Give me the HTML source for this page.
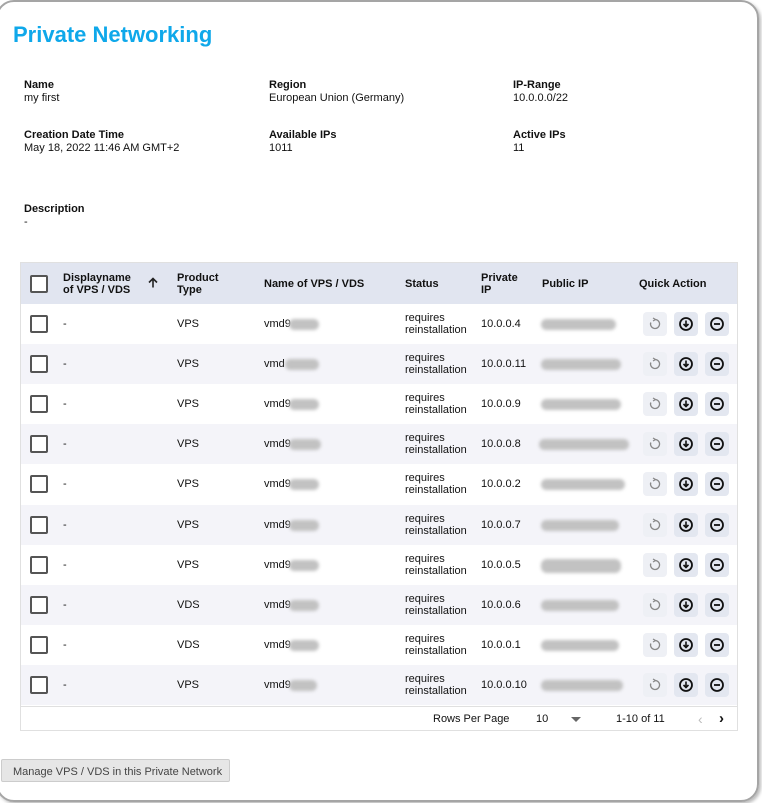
<!DOCTYPE html>
<html><head><meta charset="utf-8"><style>
*{box-sizing:border-box;margin:0;padding:0}
body{width:762px;height:803px;background:#fff;font-family:"Liberation Sans",Arial,sans-serif;position:relative;overflow:hidden;color:#111}
.frame{position:absolute;left:-4px;top:0;width:763px;height:802px;border:2px solid #a5a5a5;border-radius:18px;box-shadow:2px 2px 3px #bbb}
h1{position:absolute;left:13px;top:22px;font-size:22px;color:#0fa8ea;font-weight:bold}
.f{position:absolute;font-size:11px;line-height:13px}
.f b{display:block;font-size:11px}
.tbl{position:absolute;left:20px;top:262px;width:718px;height:469px;border:1px solid #e0e0e0}
.hd{position:absolute;left:0;top:0;width:716px;height:41px;background:#e1e5f0;font-weight:bold;font-size:11px}
.row{position:absolute;left:0;width:716px;height:40.1px;font-size:11px}
.row:nth-child(even){background:#f4f4f9}
.c{position:absolute;top:50%;transform:translateY(-50%);line-height:12px}
.cb{position:absolute;left:9px;top:50%;margin-top:-9px;width:18px;height:18px;border:2px solid #555;border-radius:2px;background:#fff}
.bl{position:absolute;top:50%;height:11px;margin-top:-5px;background:#c2c2c2;border-radius:6px;filter:blur(1.5px)}
.btn{position:absolute;top:50%;margin-top:-12px;width:24px;height:24px;border-radius:4px;background:#e3e7f0}
.btn svg{position:absolute;left:4px;top:4px}
.b1{left:622px;background:#eef0f5}.b2{left:653px}.b3{left:684px}
.ft{position:absolute;left:0;top:443px;width:716px;height:24px;border-top:1px solid #e0e0e0;font-size:11px}
.mb{position:absolute;left:1px;top:759px;width:229px;height:23px;background:#e6e6e6;border:1px solid #ccc;border-radius:2px;font-size:11px;color:#444;padding:6px 0 0 11px}
</style></head><body>
<div class="frame"></div>
<h1>Private Networking</h1>
<div class="f" style="left:24px;top:79px"><b>Name</b>my first</div>
<div class="f" style="left:269px;top:79px"><b>Region</b>European Union (Germany)</div>
<div class="f" style="left:513px;top:79px"><b>IP-Range</b>10.0.0.0/22</div>
<div class="f" style="left:24px;top:129px"><b>Creation Date Time</b>May 18, 2022 11:46 AM GMT+2</div>
<div class="f" style="left:269px;top:129px"><b>Available IPs</b>1011</div>
<div class="f" style="left:513px;top:129px"><b>Active IPs</b>11</div>
<div class="f" style="left:24px;top:203px"><b>Description</b>-</div>

<div class="tbl">
<div class="hd">
<div class="cb"></div>
<div class="c" style="left:42px">Displayname<br>of VPS / VDS</div>
<div class="c" style="left:126px"><svg width="12" height="12"><path d="M6 11V2M2 6l4-4 4 4" fill="none" stroke="#222" stroke-width="1.6"/></svg></div>
<div class="c" style="left:156px">Product<br>Type</div>
<div class="c" style="left:243px">Name of VPS / VDS</div>
<div class="c" style="left:384px">Status</div>
<div class="c" style="left:460px">Private<br>IP</div>
<div class="c" style="left:521px">Public IP</div>
<div class="c" style="left:618px">Quick Action</div>
</div>
<div style="position:absolute;left:0;top:41px;width:716px;height:402px">
<div class="row" style="top:0"><div class="cb"></div><div class="c" style="left:42px">-</div><div class="c" style="left:156px">VPS</div><div class="c" style="left:243px">vmd9</div><div class="bl" style="left:268px;width:30px"></div><div class="c" style="left:384px">requires<br>reinstallation</div><div class="c" style="left:460px">10.0.0.4</div><div class="bl" style="left:520px;width:75px"></div><div class="btn b1"><svg width="16" height="16"><path d="M8 3.5a4.5 4.5 0 1 1-4.2 3" fill="none" stroke="#888" stroke-width="1.3"/><path d="M6 2l2.5 1.5L6 5" fill="none" stroke="#888" stroke-width="1.2"/></svg></div><div class="btn b2"><svg width="16" height="16"><circle cx="8" cy="8" r="6" fill="none" stroke="#111" stroke-width="1.8"/><path d="M8 4.5v6M5.5 8L8 10.5 10.5 8" fill="none" stroke="#111" stroke-width="1.6"/></svg></div><div class="btn b3"><svg width="16" height="16"><circle cx="8" cy="8" r="6" fill="none" stroke="#111" stroke-width="1.8"/><path d="M5 8h6" stroke="#111" stroke-width="1.8"/></svg></div></div>
<div class="row" style="top:40.1px"><div class="cb"></div><div class="c" style="left:42px">-</div><div class="c" style="left:156px">VPS</div><div class="c" style="left:243px">vmd</div><div class="bl" style="left:264px;width:34px"></div><div class="c" style="left:384px">requires<br>reinstallation</div><div class="c" style="left:460px">10.0.0.11</div><div class="bl" style="left:520px;width:80px"></div><div class="btn b1"><svg width="16" height="16"><path d="M8 3.5a4.5 4.5 0 1 1-4.2 3" fill="none" stroke="#888" stroke-width="1.3"/><path d="M6 2l2.5 1.5L6 5" fill="none" stroke="#888" stroke-width="1.2"/></svg></div><div class="btn b2"><svg width="16" height="16"><circle cx="8" cy="8" r="6" fill="none" stroke="#111" stroke-width="1.8"/><path d="M8 4.5v6M5.5 8L8 10.5 10.5 8" fill="none" stroke="#111" stroke-width="1.6"/></svg></div><div class="btn b3"><svg width="16" height="16"><circle cx="8" cy="8" r="6" fill="none" stroke="#111" stroke-width="1.8"/><path d="M5 8h6" stroke="#111" stroke-width="1.8"/></svg></div></div>
<div class="row" style="top:80.2px"><div class="cb"></div><div class="c" style="left:42px">-</div><div class="c" style="left:156px">VPS</div><div class="c" style="left:243px">vmd9</div><div class="bl" style="left:268px;width:30px"></div><div class="c" style="left:384px">requires<br>reinstallation</div><div class="c" style="left:460px">10.0.0.9</div><div class="bl" style="left:520px;width:80px"></div><div class="btn b1"><svg width="16" height="16"><path d="M8 3.5a4.5 4.5 0 1 1-4.2 3" fill="none" stroke="#888" stroke-width="1.3"/><path d="M6 2l2.5 1.5L6 5" fill="none" stroke="#888" stroke-width="1.2"/></svg></div><div class="btn b2"><svg width="16" height="16"><circle cx="8" cy="8" r="6" fill="none" stroke="#111" stroke-width="1.8"/><path d="M8 4.5v6M5.5 8L8 10.5 10.5 8" fill="none" stroke="#111" stroke-width="1.6"/></svg></div><div class="btn b3"><svg width="16" height="16"><circle cx="8" cy="8" r="6" fill="none" stroke="#111" stroke-width="1.8"/><path d="M5 8h6" stroke="#111" stroke-width="1.8"/></svg></div></div>
<div class="row" style="top:120.3px"><div class="cb"></div><div class="c" style="left:42px">-</div><div class="c" style="left:156px">VPS</div><div class="c" style="left:243px">vmd9</div><div class="bl" style="left:268px;width:32px"></div><div class="c" style="left:384px">requires<br>reinstallation</div><div class="c" style="left:460px">10.0.0.8</div><div class="bl" style="left:518px;width:90px"></div><div class="btn b1"><svg width="16" height="16"><path d="M8 3.5a4.5 4.5 0 1 1-4.2 3" fill="none" stroke="#888" stroke-width="1.3"/><path d="M6 2l2.5 1.5L6 5" fill="none" stroke="#888" stroke-width="1.2"/></svg></div><div class="btn b2"><svg width="16" height="16"><circle cx="8" cy="8" r="6" fill="none" stroke="#111" stroke-width="1.8"/><path d="M8 4.5v6M5.5 8L8 10.5 10.5 8" fill="none" stroke="#111" stroke-width="1.6"/></svg></div><div class="btn b3"><svg width="16" height="16"><circle cx="8" cy="8" r="6" fill="none" stroke="#111" stroke-width="1.8"/><path d="M5 8h6" stroke="#111" stroke-width="1.8"/></svg></div></div>
<div class="row" style="top:160.4px"><div class="cb"></div><div class="c" style="left:42px">-</div><div class="c" style="left:156px">VPS</div><div class="c" style="left:243px">vmd9</div><div class="bl" style="left:268px;width:30px"></div><div class="c" style="left:384px">requires<br>reinstallation</div><div class="c" style="left:460px">10.0.0.2</div><div class="bl" style="left:520px;width:84px"></div><div class="btn b1"><svg width="16" height="16"><path d="M8 3.5a4.5 4.5 0 1 1-4.2 3" fill="none" stroke="#888" stroke-width="1.3"/><path d="M6 2l2.5 1.5L6 5" fill="none" stroke="#888" stroke-width="1.2"/></svg></div><div class="btn b2"><svg width="16" height="16"><circle cx="8" cy="8" r="6" fill="none" stroke="#111" stroke-width="1.8"/><path d="M8 4.5v6M5.5 8L8 10.5 10.5 8" fill="none" stroke="#111" stroke-width="1.6"/></svg></div><div class="btn b3"><svg width="16" height="16"><circle cx="8" cy="8" r="6" fill="none" stroke="#111" stroke-width="1.8"/><path d="M5 8h6" stroke="#111" stroke-width="1.8"/></svg></div></div>
<div class="row" style="top:200.5px"><div class="cb"></div><div class="c" style="left:42px">-</div><div class="c" style="left:156px">VPS</div><div class="c" style="left:243px">vmd9</div><div class="bl" style="left:268px;width:30px"></div><div class="c" style="left:384px">requires<br>reinstallation</div><div class="c" style="left:460px">10.0.0.7</div><div class="bl" style="left:520px;width:78px"></div><div class="btn b1"><svg width="16" height="16"><path d="M8 3.5a4.5 4.5 0 1 1-4.2 3" fill="none" stroke="#888" stroke-width="1.3"/><path d="M6 2l2.5 1.5L6 5" fill="none" stroke="#888" stroke-width="1.2"/></svg></div><div class="btn b2"><svg width="16" height="16"><circle cx="8" cy="8" r="6" fill="none" stroke="#111" stroke-width="1.8"/><path d="M8 4.5v6M5.5 8L8 10.5 10.5 8" fill="none" stroke="#111" stroke-width="1.6"/></svg></div><div class="btn b3"><svg width="16" height="16"><circle cx="8" cy="8" r="6" fill="none" stroke="#111" stroke-width="1.8"/><path d="M5 8h6" stroke="#111" stroke-width="1.8"/></svg></div></div>
<div class="row" style="top:240.6px"><div class="cb"></div><div class="c" style="left:42px">-</div><div class="c" style="left:156px">VPS</div><div class="c" style="left:243px">vmd9</div><div class="bl" style="left:268px;width:30px"></div><div class="c" style="left:384px">requires<br>reinstallation</div><div class="c" style="left:460px">10.0.0.5</div><div class="bl" style="left:520px;width:80px;height:14px;margin-top:-6px"></div><div class="btn b1"><svg width="16" height="16"><path d="M8 3.5a4.5 4.5 0 1 1-4.2 3" fill="none" stroke="#888" stroke-width="1.3"/><path d="M6 2l2.5 1.5L6 5" fill="none" stroke="#888" stroke-width="1.2"/></svg></div><div class="btn b2"><svg width="16" height="16"><circle cx="8" cy="8" r="6" fill="none" stroke="#111" stroke-width="1.8"/><path d="M8 4.5v6M5.5 8L8 10.5 10.5 8" fill="none" stroke="#111" stroke-width="1.6"/></svg></div><div class="btn b3"><svg width="16" height="16"><circle cx="8" cy="8" r="6" fill="none" stroke="#111" stroke-width="1.8"/><path d="M5 8h6" stroke="#111" stroke-width="1.8"/></svg></div></div>
<div class="row" style="top:280.7px"><div class="cb"></div><div class="c" style="left:42px">-</div><div class="c" style="left:156px">VDS</div><div class="c" style="left:243px">vmd9</div><div class="bl" style="left:268px;width:30px"></div><div class="c" style="left:384px">requires<br>reinstallation</div><div class="c" style="left:460px">10.0.0.6</div><div class="bl" style="left:520px;width:78px"></div><div class="btn b1"><svg width="16" height="16"><path d="M8 3.5a4.5 4.5 0 1 1-4.2 3" fill="none" stroke="#888" stroke-width="1.3"/><path d="M6 2l2.5 1.5L6 5" fill="none" stroke="#888" stroke-width="1.2"/></svg></div><div class="btn b2"><svg width="16" height="16"><circle cx="8" cy="8" r="6" fill="none" stroke="#111" stroke-width="1.8"/><path d="M8 4.5v6M5.5 8L8 10.5 10.5 8" fill="none" stroke="#111" stroke-width="1.6"/></svg></div><div class="btn b3"><svg width="16" height="16"><circle cx="8" cy="8" r="6" fill="none" stroke="#111" stroke-width="1.8"/><path d="M5 8h6" stroke="#111" stroke-width="1.8"/></svg></div></div>
<div class="row" style="top:320.8px"><div class="cb"></div><div class="c" style="left:42px">-</div><div class="c" style="left:156px">VDS</div><div class="c" style="left:243px">vmd9</div><div class="bl" style="left:268px;width:30px"></div><div class="c" style="left:384px">requires<br>reinstallation</div><div class="c" style="left:460px">10.0.0.1</div><div class="bl" style="left:520px;width:78px"></div><div class="btn b1"><svg width="16" height="16"><path d="M8 3.5a4.5 4.5 0 1 1-4.2 3" fill="none" stroke="#888" stroke-width="1.3"/><path d="M6 2l2.5 1.5L6 5" fill="none" stroke="#888" stroke-width="1.2"/></svg></div><div class="btn b2"><svg width="16" height="16"><circle cx="8" cy="8" r="6" fill="none" stroke="#111" stroke-width="1.8"/><path d="M8 4.5v6M5.5 8L8 10.5 10.5 8" fill="none" stroke="#111" stroke-width="1.6"/></svg></div><div class="btn b3"><svg width="16" height="16"><circle cx="8" cy="8" r="6" fill="none" stroke="#111" stroke-width="1.8"/><path d="M5 8h6" stroke="#111" stroke-width="1.8"/></svg></div></div>
<div class="row" style="top:360.9px"><div class="cb"></div><div class="c" style="left:42px">-</div><div class="c" style="left:156px">VPS</div><div class="c" style="left:243px">vmd9</div><div class="bl" style="left:268px;width:28px"></div><div class="c" style="left:384px">requires<br>reinstallation</div><div class="c" style="left:460px">10.0.0.10</div><div class="bl" style="left:520px;width:82px"></div><div class="btn b1"><svg width="16" height="16"><path d="M8 3.5a4.5 4.5 0 1 1-4.2 3" fill="none" stroke="#888" stroke-width="1.3"/><path d="M6 2l2.5 1.5L6 5" fill="none" stroke="#888" stroke-width="1.2"/></svg></div><div class="btn b2"><svg width="16" height="16"><circle cx="8" cy="8" r="6" fill="none" stroke="#111" stroke-width="1.8"/><path d="M8 4.5v6M5.5 8L8 10.5 10.5 8" fill="none" stroke="#111" stroke-width="1.6"/></svg></div><div class="btn b3"><svg width="16" height="16"><circle cx="8" cy="8" r="6" fill="none" stroke="#111" stroke-width="1.8"/><path d="M5 8h6" stroke="#111" stroke-width="1.8"/></svg></div></div>
</div>
<div class="ft">
<div class="c" style="left:412px">Rows Per Page</div>
<div class="c" style="left:515px">10</div>
<div style="position:absolute;left:550px;top:10px;width:0;height:0;border-left:5px solid transparent;border-right:5px solid transparent;border-top:5px solid #666"></div>
<div class="c" style="left:595px">1-10 of 11</div>
<div class="c" style="left:677px;color:#bbb;font-size:14px">‹</div>
<div class="c" style="left:698px;font-size:15px;font-weight:bold">›</div>
</div>
</div>
<div class="mb">Manage VPS / VDS in this Private Network</div>
</body></html>
